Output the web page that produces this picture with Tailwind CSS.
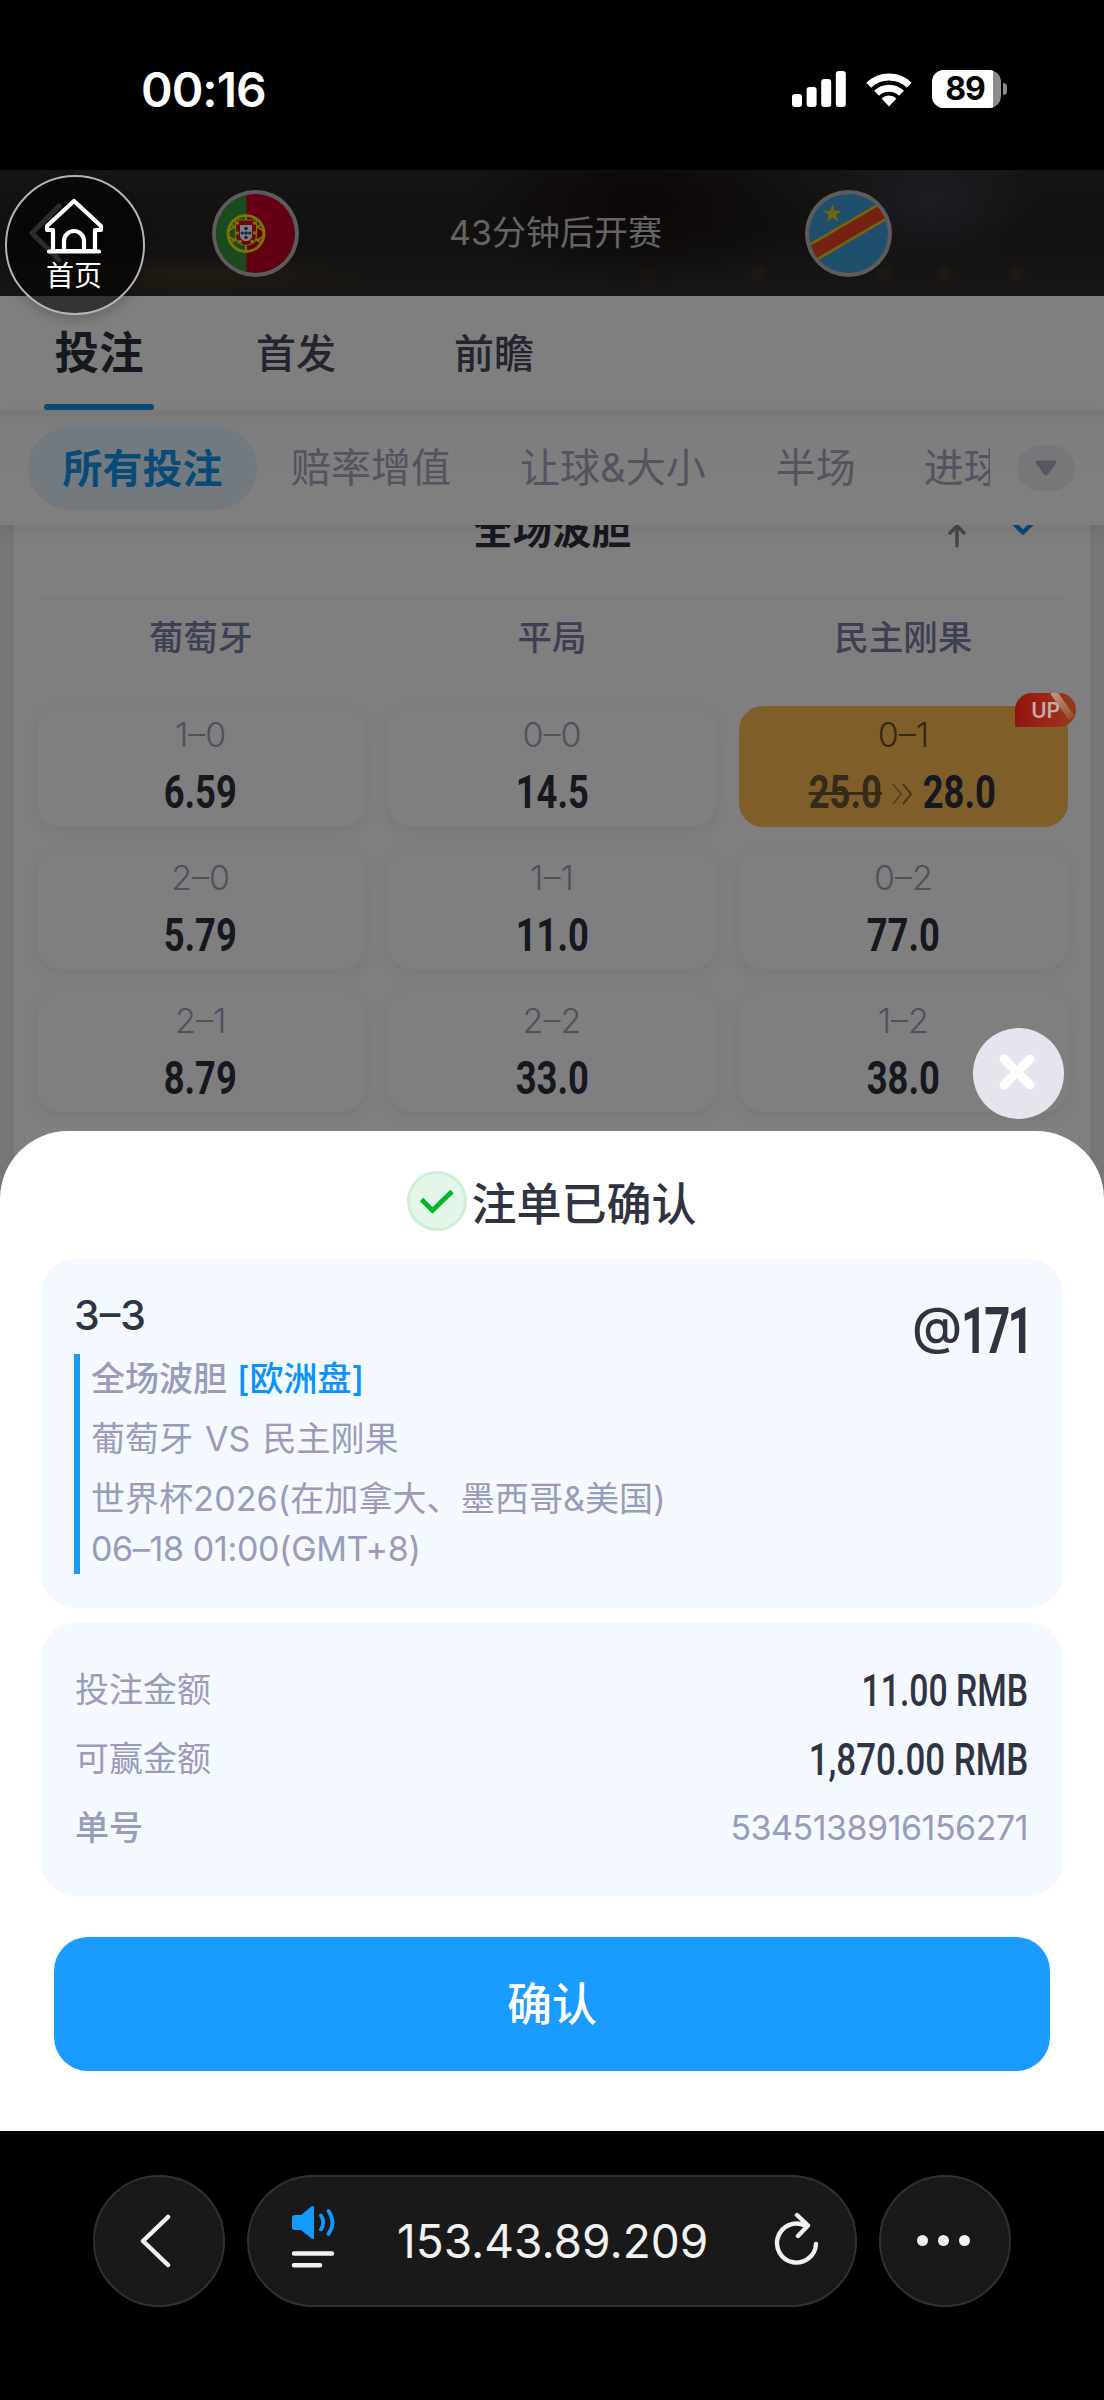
<!DOCTYPE html>
<html lang="zh-CN">
<head>
<meta charset="utf-8">
<title>注单已确认</title>
<script src="https://cdn.jsdelivr.net/npm/@tailwindcss/browser@4"></script>
</head>
<body class="bg-black">
<div class="relative w-[1104px] h-[2400px] overflow-hidden bg-black flex flex-col font-['Inter','Noto_Sans_CJK_SC',sans-serif]">

  <!-- status bar -->
  <div class="h-[170px] shrink-0 flex items-start justify-between pl-[141px] pr-[97px] pt-[64px] text-white">
    <div class="text-[48px] leading-[52px] font-semibold tracking-[-1px]">00:16</div>
    <div class="flex items-center h-[50px]">
      <svg class="w-[54px] h-[36px]" viewBox="0 0 54 36" fill="#fff"><rect x="0" y="23" width="10" height="13" rx="3"/><rect x="14.6" y="16" width="10" height="20" rx="3"/><rect x="29.2" y="8" width="10" height="28" rx="3"/><rect x="43.8" y="0" width="10" height="36" rx="3"/></svg>
      <svg class="w-[46px] h-[35px] ml-[20px]" viewBox="0 0 46 35"><path fill="none" stroke="#fff" stroke-width="7" d="M2.8 13.2a29 29 0 0 1 40.4 0M10.5 21.2a18 18 0 0 1 25 0"/><path fill="#fff" d="M15.5 26.5a11 11 0 0 1 15 0L23 34.5z"/></svg>
      <div class="relative ml-[20px] w-[69px] h-[38px] rounded-[12px] bg-[#8c8c8c] overflow-hidden">
        <div class="w-[61px] h-full bg-white"></div>
        <div class="absolute inset-0 pr-[3px] flex items-center justify-center text-black text-[32px] leading-none font-bold tracking-[-1px]">89</div>
      </div>
      <div class="ml-[2px] w-[4px] h-[12px] rounded-r-full bg-[#8c8c8c]"></div>
    </div>
  </div>

  <!-- match header -->
  <div class="h-[126px] shrink-0 relative flex items-center bg-linear-to-b from-[#2c2a27] via-[#242220] to-[#322f2a]">
    <div class="absolute inset-0 bg-[radial-gradient(ellipse_110px_70px_at_930px_30px,#363b46,transparent),radial-gradient(ellipse_180px_90px_at_640px_30px,#160e0c,transparent),radial-gradient(ellipse_170px_20px_at_200px_106px,#403524,transparent),radial-gradient(ellipse_10px_12px_at_648px_104px,#3a3024,transparent),radial-gradient(ellipse_10px_12px_at_758px_104px,#3e3326,transparent),radial-gradient(ellipse_10px_12px_at_885px_104px,#403426,transparent),radial-gradient(ellipse_10px_12px_at_945px_104px,#443626,transparent),radial-gradient(ellipse_10px_12px_at_1018px_104px,#443626,transparent)]"></div>
    <svg class="relative ml-[28px] w-[36px] h-[62px]" viewBox="0 0 36 62" fill="none" stroke="#d8d8d8" stroke-width="5" stroke-linecap="round" stroke-linejoin="round"><path d="M31 4 4 31l27 27"/></svg>
    <svg class="relative ml-[148px] w-[87px] h-[87px]" viewBox="0 0 87 87">
      <defs><clipPath id="pt"><circle cx="43.5" cy="43.5" r="39.5"/></clipPath></defs>
      <circle cx="43.5" cy="43.5" r="43.5" fill="#b8b8ba"/>
      <g clip-path="url(#pt)"><rect width="87" height="87" fill="#c80028"/><rect width="34.5" height="87" fill="#35963f"/>
      <circle cx="34" cy="43.5" r="18" fill="none" stroke="#f2e600" stroke-width="3"/>
      <ellipse cx="34" cy="43.5" rx="18" ry="8" fill="none" stroke="#f2e600" stroke-width="2"/>
      <path d="M18 34 50 53M18 53 50 34M34 25v37" stroke="#f2e600" stroke-width="2"/>
      <path d="M23.500 30h21v15c0 14-21 14-21 0z" fill="#d8102c" stroke="#f2e600" stroke-width="1.2"/>
      <path d="M28 35h12v10c0 8-12 8-12 0z" fill="#fff"/>
      <g fill="#1c4aa0"><circle cx="34" cy="38.500" r="1.800"/><circle cx="30.300" cy="43" r="1.600"/><circle cx="34" cy="43" r="1.800"/><circle cx="37.700" cy="43" r="1.600"/><circle cx="34" cy="47.500" r="1.800"/></g>
      <g fill="#f2e600"><circle cx="25.500" cy="33" r="1.800"/><circle cx="42.500" cy="33" r="1.800"/><circle cx="25.500" cy="43" r="1.800"/><circle cx="42.500" cy="43" r="1.800"/><circle cx="28" cy="51.500" r="1.800"/><circle cx="40" cy="51.500" r="1.800"/></g></g>
    </svg>
    <div class="relative ml-[150px] w-[210px] whitespace-nowrap text-[34px] leading-[48px] font-normal text-[#c8c8c8]">43分钟后开赛</div>
    <svg class="relative ml-[146px] w-[87px] h-[87px]" viewBox="0 0 87 87">
      <defs><clipPath id="cd"><circle cx="43.5" cy="43.5" r="39.500"/></clipPath></defs>
      <circle cx="43.500" cy="43.500" r="43.500" fill="#b8b8ba"/>
      <g clip-path="url(#cd)"><rect width="87" height="87" fill="#3e9fd8"/>
      <path d="M0 67 87 16" stroke="#e6c614" stroke-width="19"/><path d="M0 67 87 16" stroke="#ec4526" stroke-width="13.500"/>
      <path fill="#e6c614" d="m27.500 14 2.200 6.700h7l-5.700 4.100 2.200 6.700-5.700-4.100-5.700 4.100 2.200-6.700-5.700-4.100h7z"/></g>
    </svg>
  </div>

  <!-- primary tabs -->
  <div class="h-[114px] shrink-0 flex items-start bg-white pl-[44px] text-[#484b5c]">
    <div class="relative w-[110px] h-[114px] flex justify-center text-[44.500px] leading-[115px] font-bold text-[#2d3140]">投注<span class="absolute bottom-0 left-0 w-full h-[6px] rounded-full bg-[#1296f0]"></span></div>
    <div class="ml-[102px] text-[40px] leading-[115px] font-medium">首发</div>
    <div class="ml-[118px] text-[40px] leading-[115px] font-medium">前瞻</div>
  </div>

  <!-- filter chips -->
  <div class="relative z-[1] h-[115px] shrink-0 flex items-center bg-linear-to-b from-[#f0f0f2] via-[#fdfdfd] via-20% to-white pl-[28px] shadow-[0_6px_16px_rgba(0,0,0,0.07)]">
    <div class="w-[962px] flex items-center overflow-hidden whitespace-nowrap text-[40px] leading-[86px] text-[#a7a9c0]">
      <div class="w-[229px] h-[84px] shrink-0 rounded-full bg-[#e7f4ff] text-center font-semibold text-[#1296f0]">所有投注</div>
      <div class="ml-[34px]">赔率增值</div>
      <div class="ml-[69px]">让球&amp;大小</div>
      <div class="ml-[70px]">半场</div>
      <div class="ml-[68px]">进球</div>
    </div>
    <div class="ml-[27px] w-[58px] h-[46px] rounded-full bg-[#f1f1f5] flex items-center justify-center">
      <svg class="w-[24px] h-[18px]" viewBox="0 0 24 18"><path d="M3 1.500h18q2.500.5 1 3L14 15.500q-2 2-4 0L2 4.500q-1.500-2.500 1-3z" fill="#aeb0c4"/></svg>
    </div>
  </div>

  <!-- market card -->
  <div class="h-[700px] shrink-0 bg-[#ececf1] px-[14px]">
    <div class="h-full bg-white overflow-hidden">
      <div class="relative h-[74px] mx-[27px] border-b border-[#f0f0f4] flex justify-center items-start">
        <div class="text-[39.5px] leading-[58px] -mt-[24px] font-bold text-[#2d3140]">全场波胆</div>
        <svg class="absolute left-[906px] -top-[2px] w-[20px] h-[26px]" viewBox="0 0 20 26" fill="none" stroke="#8a8d96" stroke-width="3.500" stroke-linecap="round" stroke-linejoin="round"><path d="M10 3v20M3 10l7-7 7 7"/></svg>
        <svg class="absolute left-[970px] -top-[4px] w-[24px] h-[15px]" viewBox="0 0 24 15" fill="none" stroke="#1690e0" stroke-width="4.500" stroke-linecap="round" stroke-linejoin="round"><path d="m3 2.500 9 9 9-9"/></svg>
      </div>
      <div class="grid grid-cols-3 gap-[23px] mx-[22.500px] h-[107px] text-center text-[34.500px] leading-[78px] font-medium text-[#7b7fa8]">
        <div>葡萄牙</div><div>平局</div><div>民主刚果</div>
      </div>
      <div id="odds" class="grid grid-cols-3 gap-x-[23px] gap-y-[22.250px] mx-[22.500px]"></div>
    </div>
  </div>

  <!-- dimmer -->
  <div class="absolute left-0 top-[170px] w-full h-[1961px] bg-black/50 z-10"></div>

  <!-- home bubble -->
  <div class="absolute z-20 left-[5px] top-[175px] w-[140px] h-[140px] rounded-full border-2 border-[#b4b4b4] bg-black/60 shadow-[0_4px_12px_rgba(0,0,0,0.2)] flex flex-col items-center text-white">
    <svg class="mt-[21px] w-[60px] h-[56px] mr-[2px]" viewBox="0 0 60 56" fill="none" stroke="#fff" stroke-width="4.200" stroke-linecap="round" stroke-linejoin="round"><path d="M30 3 3 28v4h6v21h42V32h6v-4zM5 53.500h50M20 53V43a10 10 0 0 1 20 0v10"/></svg>
    <div class="mt-[2px] mr-[2px] text-[28px] leading-[40px]">首页</div>
  </div>

  <!-- close -->
  <div class="absolute z-20 left-[973px] top-[1028px] w-[91px] h-[91px] rounded-full bg-[#e4e5ed] flex items-center justify-center">
    <svg class="w-[38px] h-[38px] mr-[3px] mb-[3px]" viewBox="0 0 38 38" stroke="#fff" stroke-width="9" stroke-linecap="round"><path d="m6 6 26 26M32 6 6 32"/></svg>
  </div>

  <!-- confirmation sheet -->
  <div class="absolute z-20 left-0 top-[1131px] w-full h-[1000px] rounded-t-[68px] bg-white flex flex-col px-[41px] text-[#2f3342]">
    <div class="h-[128px] shrink-0 flex items-center justify-center pt-[12px] gap-[4px]">
      <svg class="w-[60px] h-[60px] -mt-[1px]" viewBox="0 0 60 60"><circle cx="30" cy="30" r="28.500" fill="#e4f6e9" stroke="#cdefd5" stroke-width="3"/><path d="m14.500 28.500 11 11L45 20.500" fill="none" stroke="#00b52c" stroke-width="4.800"/></svg>
      <div class="text-[45px] leading-[60px] font-medium mt-[7px]">注单已确认</div>
    </div>

    <div class="h-[349px] shrink-0 rounded-[34px] bg-[#f3f9fe] pl-[33px] pr-[35px] pt-[30px] flex justify-between">
      <div class="flex flex-col">
        <div class="text-[41px] leading-[52px] font-medium">3–3</div>
        <div class="mt-[13px] h-[220px] border-l-[6px] border-[#179bff] pl-[11px] text-[34px] text-[#989bb9] whitespace-nowrap">
          <div class="h-[54px] leading-[50px] font-medium">全场波胆 <span class="text-[#0a92ff] ml-[1px]">[欧洲盘]</span></div>
          <div class="h-[60px] leading-[62px] [word-spacing:2.500px]">葡萄牙 VS 民主刚果</div>
          <div class="h-[60px] leading-[62px] tracking-[0.1px]">世界杯2026(在加拿大、墨西哥&amp;美国)</div>
          <div class="leading-[41px] tracking-[-0.350px]">06–18 01:00(GMT+8)</div>
        </div>
      </div>
      <div class="flex items-center h-[84px]">
        <span class="text-[51px] font-medium leading-none -mt-[12px]">@</span><span class="w-[66px] flex justify-end"><span class="font-['Roboto'] font-bold text-[65px] leading-none tracking-[-4px] origin-right scale-x-[0.7] -mr-[3px]">171</span></span>
      </div>
    </div>

    <div class="mt-[15px] h-[273px] shrink-0 rounded-[34px] bg-[#f3f9fe] pl-[34px] pr-[35px] pt-[32px] text-[34px] text-[#989bb9]">
      <div class="flex items-center justify-between h-[69px]"><span>投注金额</span><span class="pt-[2px] font-['Roboto'] font-medium text-[45px] text-[#2f3342] origin-right scale-x-[0.75]">11.00 RMB</span></div>
      <div class="flex items-center justify-between h-[69px]"><span>可赢金额</span><span class="pt-[2px] font-['Roboto'] font-medium text-[45px] text-[#2f3342] origin-right scale-x-[0.775]">1,870.00 RMB</span></div>
      <div class="flex items-center justify-between h-[69px]"><span class="font-medium">单号</span><span class="tracking-[-0.5px]">5345138916156271</span></div>
    </div>

    <button class="mt-[41px] mx-[13px] h-[134px] shrink-0 rounded-[34px] bg-[#199bff] text-white text-[45px] pt-[2px] font-medium">确认</button>
  </div>

  <!-- browser toolbar -->
  <div class="absolute left-0 top-[2131px] w-full h-[269px] bg-black px-[93px] pt-[44px] flex gap-[22px] text-[#f2f2f2]">
    <div class="w-[132px] h-[132px] rounded-full bg-[#191919] border-2 border-[#303030] flex items-center justify-center">
      <svg class="w-[32px] h-[54px] mr-[9px]" viewBox="0 0 32 54" fill="none" stroke="#f2f2f2" stroke-width="4.500" stroke-linecap="round" stroke-linejoin="round"><path d="M29 3 4 27l25 24"/></svg>
    </div>
    <div class="w-[610px] h-[132px] rounded-full bg-[#191919] border-2 border-[#303030] flex items-center pl-[42px] pr-[35px]">
      <svg class="w-[46px] h-[66px] -mt-[6px]" viewBox="0 0 46 66"><path fill="#129aff" d="M1 13q0-3 3-3h6L20.500 1.500q2.500-1.500 2.500 1v30q0 2.500-2.500 1L10 25H4q-3 0-3-3z"/><path fill="none" stroke="#129aff" stroke-width="3.800" stroke-linecap="round" d="M30 10.500q4.500 7 0 14M37.500 6q8 11.500 0 23"/><path stroke="#f2f2f2" stroke-width="4.500" stroke-linecap="round" d="M3 48.500h38M3 60.300h26"/></svg>
      <div class="flex-1 pl-[60px] text-[46px] leading-[60px] whitespace-nowrap">153.43.89.209</div>
      <svg class="w-[46px] h-[56px] -mt-[5px]" viewBox="0 0 46 56" fill="none" stroke="#f2f2f2" stroke-width="4.400" stroke-linecap="round" stroke-linejoin="round"><path d="M42 33A19.500 19.500 0 1 1 31 14.500M23 4l11 10.500L24 25"/></svg>
    </div>
    <div class="w-[132px] h-[132px] rounded-full bg-[#191919] border-2 border-[#303030] flex items-center justify-center gap-[10px] pr-[3px] pb-[1px]">
      <i class="w-[11px] h-[11px] rounded-full bg-[#f2f2f2]"></i><i class="w-[11px] h-[11px] rounded-full bg-[#f2f2f2]"></i><i class="w-[11px] h-[11px] rounded-full bg-[#f2f2f2]"></i>
    </div>
  </div>
</div>

<script>
  const rows = [
    ['1–0','6.59'],['0–0','14.5'],['0–1','28.0','25.0'],
    ['2–0','5.79'],['1–1','11.0'],['0–2','77.0'],
    ['2–1','8.79'],['2–2','33.0'],['1–2','38.0'],
  ];
  document.getElementById('odds').innerHTML = rows.map(([score, odd, old]) => old ? `
    <div class="relative h-[120.500px] rounded-[24px] bg-[#ffbd54] flex flex-col items-center">
      <div class="mt-[9px] h-[40px] text-[34px] leading-[40px] font-light text-[#6b5028]">${score}</div>
      <div class="mt-[9px] pr-[2px] h-[56px] w-full flex justify-center items-center font-['Roboto'] font-bold text-[46px] leading-[56px]">
        <div class="w-[76px] flex justify-center"><span class="scale-x-[0.79] text-[#6e5530] line-through decoration-3">${old}</span></div>
        <svg class="mx-[8px] mt-[4px] w-[22px] h-[24px]" viewBox="0 0 22 24" fill="none" stroke="#8a6630" stroke-width="2"><path d="m2 2 8 10-8 10" stroke="#b08540"/><path d="m12 2 8 10-8 10"/></svg>
        <div class="w-[76px] flex justify-center"><span class="scale-x-[0.79] text-[#2d3140]">${odd}</span></div>
      </div>
      <div class="absolute z-[15] left-[276px] -top-[13px] w-[61px] h-[34px] rounded-[17px] rounded-bl-none overflow-hidden bg-linear-to-r from-[#8e1611] via-[#a02416] to-[#8c3c1c] pl-[16px] text-[21px] leading-[35px] font-semibold text-[#b9aeac]"><span class="absolute left-[44px] -top-[4px] w-[7px] h-[32px] -rotate-[35deg] bg-linear-to-b from-[#c49a88] to-[#c49a88]/20"></span><span class="relative">UP</span></div>
    </div>` : `
    <div class="h-[120.500px] rounded-[24px] bg-white shadow-[0_4px_18px_rgba(0,0,0,0.08)] flex flex-col items-center">
      <div class="mt-[9px] h-[40px] text-[34px] leading-[40px] font-light text-[#a0a2ba]">${score}</div>
      <div class="mt-[9px] h-[56px] font-['Roboto'] font-bold text-[46px] leading-[56px] text-[#2d3140] scale-x-[0.79]">${odd}</div>
    </div>`).join('');
</script>
</body>
</html>
